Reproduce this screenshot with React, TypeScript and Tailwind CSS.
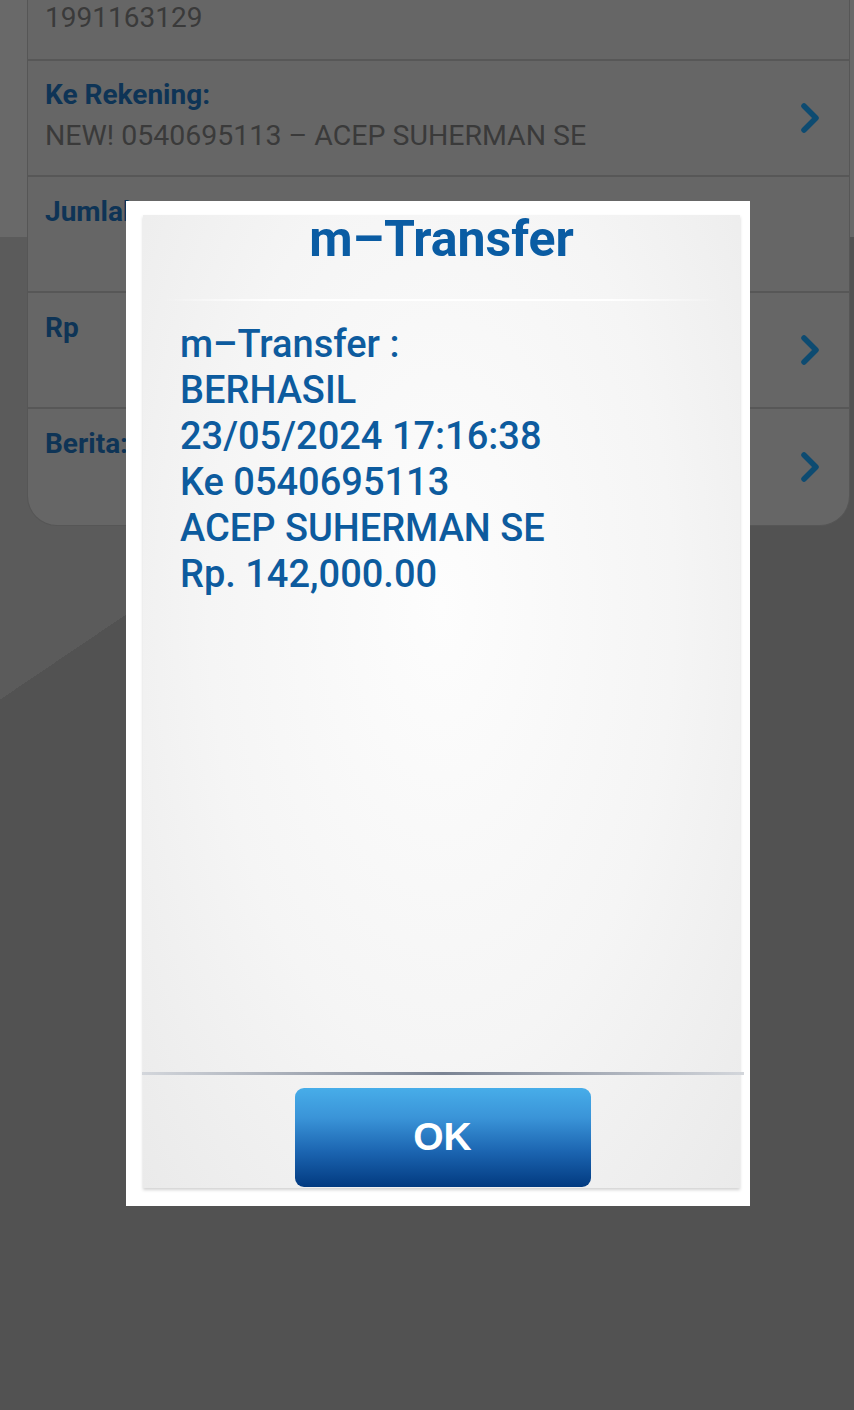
import React from "react";

const rows = [
  { label: "Jumlah:", chevron: false },
  { label: "Rp", chevron: true },
  { label: "Berita:", chevron: true },
];

const lines = [
  "m–Transfer :",
  "BERHASIL",
  "23/05/2024 17:16:38",
  "Ke 0540695113",
  "ACEP SUHERMAN SE",
  "Rp. 142,000.00",
];

function Chevron() {
  return (
    <svg width="22" height="34" viewBox="0 0 22 34" className="shrink-0">
      <polyline
        points="5,5 17,17 5,29"
        fill="none"
        stroke="#0d4b71"
        strokeWidth="5.5"
        strokeLinecap="round"
        strokeLinejoin="round"
      />
    </svg>
  );
}

function FormCard() {
  return (
    <div className="ml-[27px] w-[823px] overflow-hidden rounded-b-[30px] border-x border-b border-[#565656] bg-[#666666]">
      <div className="h-[61px] border-b-2 border-[#575757] pl-[17px] pt-[2px] text-[28px] leading-[32px] text-[#3a3a3a]">
        1991163129
      </div>

      <div className="flex h-[116px] items-center border-b-2 border-[#575757] pl-[17px] pr-[28px]">
        <div className="flex-1 self-start pt-[13px] leading-[41px]">
          <div className="text-[28px] font-bold text-[#0e3456]">Ke Rekening:</div>
          <div className="text-[28.5px] text-[#3a3a3a]">NEW! 0540695113 – ACEP SUHERMAN SE</div>
        </div>
        <Chevron />
      </div>

      {rows.map((r, i) => (
        <div
          key={r.label}
          className={
            i < rows.length - 1
              ? "flex h-[116px] items-center border-b-2 border-[#575757] pl-[17px] pr-[28px]"
              : "flex h-[116px] items-center pl-[17px] pr-[28px]"
          }
        >
          <div className="flex-1 self-start pt-[14px] text-[28px] leading-[41px]">
            <div className="font-bold text-[#0e3456]">{r.label}</div>
          </div>
          {r.chevron && <Chevron />}
        </div>
      ))}
    </div>
  );
}

function ResultDialog() {
  return (
    <div className="absolute left-[126px] top-[201px] h-[1005px] w-[624px] bg-white pl-[17px] pr-[10px] pt-[14px]">
      <div className="flex h-[973px] flex-col bg-[radial-gradient(ellipse_at_50%_40%,#fdfdfd_0%,#f5f5f5_55%,#eaeaea_100%)] shadow-[0_2px_3px_rgba(0,0,0,0.18)]">
        <div className="text-center text-[50px] font-bold leading-[48px] text-[#0a5ca3]">
          m–Transfer
        </div>
        <div className="mx-[20px] mt-[36px] h-[2px] bg-[linear-gradient(to_right,transparent,#ffffff_20%,#ffffff_80%,transparent)]" />

        <div className="flex-1 pl-[37px] pt-[20px] text-[38px] font-medium leading-[46px] text-[#0d5b9e]">
          {lines.map((l) => (
            <div key={l}>{l}</div>
          ))}
        </div>

        <div className="-ml-[1px] -mr-[4px] h-[3px] bg-[linear-gradient(to_right,#d3d6db,#7a8393_50%,#d3d6db)]" />

        <div className="flex justify-center pb-[1px] pl-[2px] pt-[13px]">
          <button className="flex h-[99px] w-[296px] items-center justify-center rounded-[9px] bg-[linear-gradient(to_bottom,#47ade9_0%,#3a94d8_30%,#1b64b0_65%,#023a80_100%)] font-['Liberation_Sans',Arial,sans-serif] text-[39px] font-bold text-white">
            OK
          </button>
        </div>
      </div>
    </div>
  );
}

export default function App() {
  return (
    <div className="relative h-[1410px] w-[854px] overflow-hidden bg-[#535353] bg-[image:linear-gradient(to_bottom,#696969_0px,#696969_237px,transparent_237px),linear-gradient(146deg,#5b5b5b_580px,#525252_580px)] font-['Roboto',sans-serif]">
      <FormCard />
      <ResultDialog />
    </div>
  );
}
